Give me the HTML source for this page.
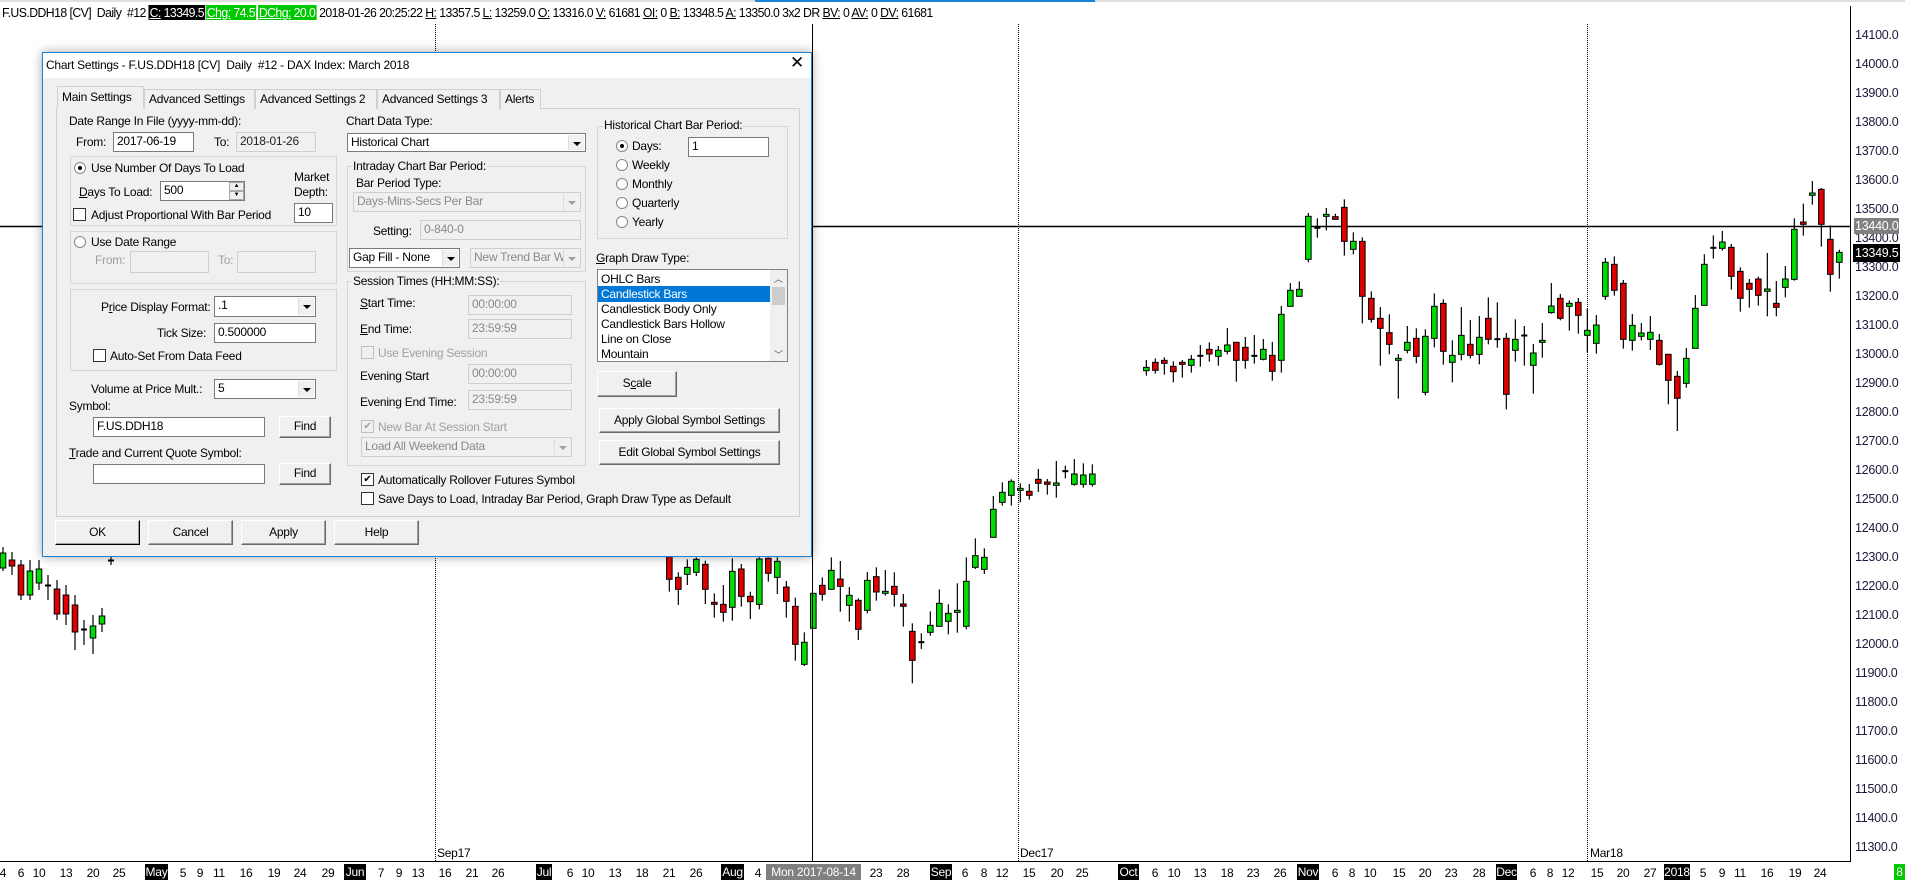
<!DOCTYPE html>
<html><head><meta charset="utf-8">
<style>
*{box-sizing:border-box;margin:0;padding:0}
body{width:1905px;height:880px;overflow:hidden;background:#fff;position:relative;font-family:"Liberation Sans",Arial,sans-serif;font-size:12px;letter-spacing:-0.25px;color:#000}
.a{position:absolute}
.t{position:absolute;line-height:14px;white-space:nowrap}
.g{color:#a0a0a0}
.in{position:absolute;background:#fff;border:1px solid #7a7a7a;line-height:17px;padding-left:3px;white-space:nowrap;overflow:hidden}
.dis{background:#f0f0f0;border-color:#cfcfcf;color:#8a8a8a}
.ar{position:absolute;right:1px;top:1px;bottom:1px;width:16px;background:#f0f0f0;border-left:1px solid #ddd}
.ar:after{content:"";position:absolute;left:4px;top:7px;border-left:4px solid transparent;border-right:4px solid transparent;border-top:4px solid #000}
.dis .ar:after{border-top-color:#a0a0a0}
.btn{position:absolute;background:#f0f0f0;border:1px solid;border-color:#fff #696969 #696969 #fff;box-shadow:inset -1px -1px 0 #a0a0a0;text-align:center;white-space:nowrap}
.gb{position:absolute;border:1px solid #d5d5d5}
.cb{position:absolute;width:13px;height:13px;border:1px solid #333;background:#fff}
.cb.dc{border-color:#c0c0c0;background:#f0f0f0}
.rd{position:absolute;width:12px;height:12px;border-radius:50%;border:1px solid #888;background:#fff}
.rd.on:after{content:"";position:absolute;left:3px;top:3px;width:4px;height:4px;border-radius:50%;background:#000}
.tab{position:absolute;top:89px;height:20px;border:1px solid #d0d0d0;border-bottom:none;background:#f0f0f0;line-height:18px;padding:0 4px;white-space:nowrap}
.yl{position:absolute;left:1855px;line-height:14px;font-size:12.5px;color:#1a1a3a}
.xl{position:absolute;top:866px;line-height:14px;font-size:12px;transform:translateX(-50%)}
.xb{position:absolute;top:864px;height:16px;background:#000;color:#fff;font-size:12px;line-height:16px;text-align:center}
u{text-decoration:underline}
</style></head><body>

<svg class="a" style="left:0;top:0" width="1905" height="880" id="ch">
<rect x="0" y="0" width="1905" height="2" fill="#e0e0e0"/>
<rect x="755" y="0" width="340" height="2" fill="#1883d7"/>
<line x1="435.5" y1="24" x2="435.5" y2="861" stroke="#000" stroke-dasharray="1,1"/>
<line x1="1018.5" y1="24" x2="1018.5" y2="861" stroke="#000" stroke-dasharray="1,1"/>
<line x1="1587.5" y1="24" x2="1587.5" y2="861" stroke="#000" stroke-dasharray="1,1"/>
<line x1="0" y1="226.5" x2="1850" y2="226.5" stroke="#000" stroke-width="1.5"/>
<g id="cd"></g>
<line x1="812.5" y1="24" x2="812.5" y2="861" stroke="#000"/>
<line x1="1850.5" y1="6" x2="1850.5" y2="862" stroke="#000"/>
<line x1="0" y1="861.5" x2="1851" y2="861.5" stroke="#000"/>
</svg>
<script>
(function(){
var g=document.getElementById('cd'),s='';
function c(x,t,b,h,l,k){
 var col=k=='g'?'#00dd00':k=='r'?'#e00000':'#000';
 if(t>b){var q=t;t=b;b=q;}
 s+='<line x1="'+x+'" y1="'+h+'" x2="'+x+'" y2="'+l+'" stroke="#000" stroke-width="1.2"/>';
 var hh=Math.max(b-t,1.5);
 if(k=='d'){s+='<rect x="'+(x-3)+'" y="'+(t-0.5)+'" width="6" height="2" fill="#000"/>';}
 else s+='<rect x="'+(x-2.8)+'" y="'+t+'" width="5.6" height="'+hh+'" fill="'+col+'" stroke="#000" stroke-width="1"/>';
}
function grp(bx,by,a){a.forEach(function(e){c(bx+e[0]/3,by+e[1]/3,by+e[2]/3,by+e[3]/3,by+e[4]/3,e[5]);});}
[[3,553,568,547,571,'g'],[12,560,566,552,575,'r'],[21,565,595,560,600,'r'],[30,571,595,560,600,'g'],[39,569,583,560,590,'g'],[48,585,586,575,600,'d'],[57,589,614,580,620,'r'],[66,595,614,585,625,'r'],[75,605,632,595,650,'r'],[84,629,630,620,645,'d'],[93,626,638,615,654,'g'],[102,616,624,608,632,'g']].forEach(function(e){c(e[0],e[1],e[2],e[3],e[4],e[5]);});
c(111,560,561,553,565,'d');
grp(640,450,[[88,240,388,240,425,'r'],[115,382,418,367,465,'r'],[142,352,373,328,405,'g'],[169,328,367,322,378,'g'],[196,343,418,332,462,'r'],[223,457,463,430,503,'r'],[250,463,487,405,515,'r'],[277,364,472,325,512,'g'],[304,357,439,342,470,'r'],[331,439,455,425,507,'r'],[358,327,463,322,478,'g'],[385,325,370,322,395,'r'],[412,334,382,322,432,'g'],[439,411,454,393,503,'r'],[466,469,583,443,632,'r'],[493,577,643,547,648,'g'],[520,430,535,430,535,'g'],[547,406,433,382,452,'r'],[574,361,418,322,418,'g'],[601,387,409,333,485,'r'],[628,436,466,411,515,'g'],[655,451,538,445,570,'r'],[682,391,481,366,490,'g'],[709,380,426,352,452,'r'],[736,424,430,360,437,'g'],[763,409,433,367,470,'r'],[790,462,469,432,530,'r'],[817,544,631,520,700,'r'],[844,575,577,550,597,'d'],[871,526,547,484,557,'g'],[898,460,529,418,529,'g'],[925,490,514,463,553,'g'],[952,481,487,400,548,'g'],[979,394,529,322,538,'g'],[1006,317,352,265,357,'g'],[1033,322,358,295,372,'g'],[1060,178,262,138,262,'g'],[1087,127,157,97,167,'g'],[1114,94,136,88,167,'g'],[1141,115,121,100,157,'g'],[1168,124,136,102,149,'r'],[1195,88,100,57,126,'r'],[1222,96,103,87,134,'r'],[1249,99,106,33,143,'g'],[1276,62,63,47,85,'d'],[1303,72,103,27,107,'g'],[1330,75,103,40,113,'g'],[1357,72,103,43,110,'g']]);
grp(1100,180,[[139,562,572,540,587,'g'],[166,547,571,535,581,'r'],[193,541,550,532,584,'r'],[220,559,575,544,607,'r'],[247,547,553,540,593,'r'],[274,538,556,525,578,'g'],[301,526,528,495,560,'d'],[328,508,522,487,545,'r'],[355,511,529,498,557,'g'],[382,495,514,444,523,'g'],[409,487,541,486,605,'r'],[436,502,541,471,566,'r'],[463,526,529,465,551,'d'],[490,508,538,477,541,'g'],[517,526,574,486,602,'r'],[544,403,541,378,578,'g'],[571,331,379,309,379,'g'],[598,328,349,304,349,'g'],[625,109,238,99,247,'g'],[652,142,143,115,173,'d'],[679,103,109,84,151,'g'],[706,110,118,101,118,'r'],[733,82,184,58,227,'r'],[760,184,208,157,223,'g'],[787,184,349,172,430,'r'],[814,355,418,334,428,'r'],[841,415,445,381,557,'r'],[868,458,493,403,523,'r'],[895,535,541,522,656,'g'],[922,487,511,438,520,'g'],[949,475,529,445,550,'r'],[976,469,637,448,646,'g'],[1003,379,475,340,502,'g'],[1030,370,514,358,554,'r'],[1057,526,547,481,607,'g'],[1084,466,523,381,541,'g'],[1111,493,526,420,535,'r'],[1138,472,523,408,553,'g'],[1165,415,478,352,493,'r'],[1192,476,478,367,503,'d']]);
grp(1490,160,[[49,535,703,519,748,'r'],[76,538,571,478,605,'g'],[103,525,526,498,617,'d'],[130,579,616,552,701,'g'],[157,541,547,489,593,'g'],[184,438,458,369,461,'g'],[211,415,475,402,481,'r'],[238,430,439,421,512,'g'],[265,427,466,414,521,'r'],[292,511,526,445,578,'g'],[319,495,550,465,581,'g'],[346,307,409,294,419,'g'],[373,313,391,289,407,'r'],[400,370,538,360,566,'r'],[427,496,541,462,572,'g'],[454,519,529,489,541,'g'],[481,517,538,468,570,'g'],[508,541,613,522,617,'r'],[535,583,661,583,733,'r'],[562,649,715,633,813,'r'],[589,595,670,564,683,'g'],[616,445,565,405,565,'g'],[643,313,436,283,436,'g'],[670,262,263,226,296,'d'],[697,246,265,213,272,'g'],[724,262,349,252,389,'r'],[751,334,415,322,455,'r'],[778,370,388,357,443,'r'],[805,357,406,350,437,'r'],[832,387,394,279,469,'g'],[859,430,442,363,469,'r'],[886,357,382,318,412,'g'],[913,208,358,175,362,'g'],[940,186,193,131,227,'r'],[967,99,106,63,134,'g'],[994,88,193,84,260,'r'],[1021,238,343,196,395,'r'],[1048,277,307,269,356,'g']]);
g.innerHTML=s;
})();
</script>

<div class="t" style="left:2px;top:6px;font-size:13px;letter-spacing:-0.6px;transform:scaleX(0.945);transform-origin:0 0">F.US.DDH18 [CV]&nbsp; Daily&nbsp; #12 <span style="background:#000;color:#fff;padding:0 1px"><u>C:</u> 13349.5</span><span style="background:#00c800;color:#fff;padding:0 1px;margin-left:1px"><u>Chg:</u> 74.5</span><span style="background:#00c800;color:#fff;padding:0 1px;margin-left:2px"><u>DChg:</u> 20.0</span> 2018-01-26 20:25:22 <u>H:</u> 13357.5 <u>L:</u> 13259.0 <u>O:</u> 13316.0 <u>V:</u> 61681 <u>OI:</u> 0 <u>B:</u> 13348.5 <u>A:</u> 13350.0 3x2 DR <u>BV:</u> 0 <u>AV:</u> 0 <u>DV:</u> 61681</div>

<div class="yl" style="top:28px">14100.0</div>
<div class="yl" style="top:57px">14000.0</div>
<div class="yl" style="top:86px">13900.0</div>
<div class="yl" style="top:115px">13800.0</div>
<div class="yl" style="top:144px">13700.0</div>
<div class="yl" style="top:173px">13600.0</div>
<div class="yl" style="top:202px">13500.0</div>
<div class="yl" style="top:231px">13400.0</div>
<div class="yl" style="top:260px">13300.0</div>
<div class="yl" style="top:289px">13200.0</div>
<div class="yl" style="top:318px">13100.0</div>
<div class="yl" style="top:347px">13000.0</div>
<div class="yl" style="top:376px">12900.0</div>
<div class="yl" style="top:405px">12800.0</div>
<div class="yl" style="top:434px">12700.0</div>
<div class="yl" style="top:463px">12600.0</div>
<div class="yl" style="top:492px">12500.0</div>
<div class="yl" style="top:521px">12400.0</div>
<div class="yl" style="top:550px">12300.0</div>
<div class="yl" style="top:579px">12200.0</div>
<div class="yl" style="top:608px">12100.0</div>
<div class="yl" style="top:637px">12000.0</div>
<div class="yl" style="top:666px">11900.0</div>
<div class="yl" style="top:695px">11800.0</div>
<div class="yl" style="top:724px">11700.0</div>
<div class="yl" style="top:753px">11600.0</div>
<div class="yl" style="top:782px">11500.0</div>
<div class="yl" style="top:811px">11400.0</div>
<div class="yl" style="top:840px">11300.0</div>
<div class="yl" style="top:218px;left:1854px;background:#808080;color:#fff;padding:1px 1px">13440.0</div>
<div class="yl" style="top:244px;left:1853px;background:#000;color:#fff;padding:2px 2px">13349.5</div>

<div class="t" style="left:437px;top:846px">Sep17</div>
<div class="t" style="left:1020px;top:846px">Dec17</div>
<div class="t" style="left:1590px;top:846px">Mar18</div>
<div class="xl" style="left:3px">4</div><div class="xl" style="left:21px">6</div><div class="xl" style="left:39px">10</div><div class="xl" style="left:66px">13</div><div class="xl" style="left:93px">20</div><div class="xl" style="left:119px">25</div>
<div class="xb" style="left:145px;width:23px">May</div>
<div class="xl" style="left:183px">5</div><div class="xl" style="left:200px">9</div><div class="xl" style="left:219px">11</div><div class="xl" style="left:246px">16</div><div class="xl" style="left:274px">19</div><div class="xl" style="left:300px">24</div><div class="xl" style="left:328px">29</div>
<div class="xb" style="left:344px;width:22px">Jun</div>
<div class="xl" style="left:381px">7</div><div class="xl" style="left:399px">9</div><div class="xl" style="left:418px">13</div><div class="xl" style="left:445px">16</div><div class="xl" style="left:472px">21</div><div class="xl" style="left:498px">26</div>
<div class="xb" style="left:536px;width:16px">Jul</div>
<div class="xl" style="left:570px">6</div><div class="xl" style="left:588px">10</div><div class="xl" style="left:615px">13</div><div class="xl" style="left:642px">18</div><div class="xl" style="left:669px">21</div><div class="xl" style="left:696px">26</div>
<div class="xb" style="left:721px;width:23px">Aug</div>
<div class="xl" style="left:758px">4</div>
<div class="xb" style="left:766px;width:95px;background:#808080">Mon 2017-08-14</div>
<div class="xl" style="left:876px">23</div><div class="xl" style="left:903px">28</div>
<div class="xb" style="left:930px;width:22px">Sep</div>
<div class="xl" style="left:965px">6</div><div class="xl" style="left:984px">8</div><div class="xl" style="left:1002px">12</div><div class="xl" style="left:1029px">15</div><div class="xl" style="left:1057px">20</div><div class="xl" style="left:1082px">25</div>
<div class="xb" style="left:1118px;width:21px">Oct</div>
<div class="xl" style="left:1155px">6</div><div class="xl" style="left:1174px">10</div><div class="xl" style="left:1200px">13</div><div class="xl" style="left:1227px">18</div><div class="xl" style="left:1253px">23</div><div class="xl" style="left:1280px">26</div>
<div class="xb" style="left:1297px;width:22px">Nov</div>
<div class="xl" style="left:1335px">6</div><div class="xl" style="left:1352px">8</div><div class="xl" style="left:1370px">10</div><div class="xl" style="left:1399px">15</div><div class="xl" style="left:1425px">20</div><div class="xl" style="left:1451px">23</div><div class="xl" style="left:1479px">28</div>
<div class="xb" style="left:1496px;width:21px">Dec</div>
<div class="xl" style="left:1533px">6</div><div class="xl" style="left:1550px">8</div><div class="xl" style="left:1568px">12</div><div class="xl" style="left:1597px">15</div><div class="xl" style="left:1623px">20</div><div class="xl" style="left:1650px">27</div>
<div class="xb" style="left:1664px;width:26px">2018</div>
<div class="xl" style="left:1703px">5</div><div class="xl" style="left:1722px">9</div><div class="xl" style="left:1740px">11</div><div class="xl" style="left:1767px">16</div><div class="xl" style="left:1795px">19</div><div class="xl" style="left:1820px">24</div>
<div class="xb" style="left:1894px;width:11px;background:#00c800">8</div>

<div class="a" style="left:42px;top:52px;width:770px;height:505px;border:1px solid #1883d7;background:#f0f0f0;box-shadow:0 0 10px rgba(0,0,0,.35)"></div>
<div class="a" style="left:43px;top:53px;width:768px;height:25px;background:#fff"></div>
<div class="t" style="left:46px;top:58px">Chart Settings - F.US.DDH18 [CV]&nbsp; Daily&nbsp; #12 - DAX Index: March 2018</div>
<div class="t" style="left:790px;top:56px;font-size:17px">✕</div>

<div class="a" style="left:56px;top:108px;width:744px;height:409px;border:1px solid #d0d0d0;background:#f0f0f0"></div>
<div class="tab" style="left:144px;width:111px">Advanced Settings</div>
<div class="tab" style="left:255px;width:122px">Advanced Settings 2</div>
<div class="tab" style="left:377px;width:123px">Advanced Settings 3</div>
<div class="tab" style="left:500px;width:41px">Alerts</div>
<div class="tab" style="left:57px;top:86px;height:23px;width:87px;line-height:20px;background:#f0f0f0;z-index:2;border-bottom:1px solid #f0f0f0">Main Settings</div>

<div class="t" style="left:69px;top:114px">Date Range In File (yyyy-mm-dd):</div>
<div class="t" style="left:76px;top:135px">From:</div>
<div class="in" style="left:113px;top:132px;width:81px;height:20px">2017-06-19</div>
<div class="t" style="left:214px;top:135px">To:</div>
<div class="in dis" style="left:236px;top:132px;width:80px;height:20px;color:#222">2018-01-26</div>

<div class="gb" style="left:70px;top:156px;width:267px;height:70px"></div>
<div class="rd on" style="left:74px;top:162px"></div>
<div class="t" style="left:91px;top:161px">Use Number Of Days To Load</div>
<div class="t" style="left:79px;top:185px"><u>D</u>ays To Load:</div>
<div class="in" style="left:160px;top:181px;width:85px;height:20px">500</div>
<div class="a" style="left:229px;top:182px;width:15px;height:9px;background:#f0f0f0;border:1px solid #aaa;font-size:6px;line-height:7px;text-align:center">▲</div>
<div class="a" style="left:229px;top:191px;width:15px;height:9px;background:#f0f0f0;border:1px solid #aaa;font-size:6px;line-height:7px;text-align:center">▼</div>
<div class="t" style="left:294px;top:170px">Market</div>
<div class="t" style="left:294px;top:185px">Depth:</div>
<div class="in" style="left:294px;top:203px;width:39px;height:20px">10</div>
<div class="cb" style="left:73px;top:208px"></div>
<div class="t" style="left:91px;top:208px">Adjust Proportional With Bar Period</div>

<div class="gb" style="left:70px;top:231px;width:267px;height:53px"></div>
<div class="rd" style="left:74px;top:236px"></div>
<div class="t" style="left:91px;top:235px">Use Date Range</div>
<div class="t g" style="left:95px;top:253px">From:</div>
<div class="in dis" style="left:130px;top:251px;width:79px;height:22px"></div>
<div class="t g" style="left:218px;top:253px">To:</div>
<div class="in dis" style="left:237px;top:251px;width:79px;height:22px"></div>

<div class="gb" style="left:70px;top:289px;width:267px;height:82px"></div>
<div class="t" style="left:101px;top:300px">P<u>r</u>ice Display Format:</div>
<div class="in" style="left:214px;top:296px;width:102px;height:21px">.1<i class="ar"></i></div>
<div class="t" style="left:157px;top:326px">Tick Size:</div>
<div class="in" style="left:214px;top:323px;width:102px;height:20px">0.500000</div>
<div class="cb" style="left:93px;top:349px"></div>
<div class="t" style="left:110px;top:349px">Auto-Set From Data Feed</div>

<div class="t" style="left:91px;top:382px">Volume at Price Mult.:</div>
<div class="in" style="left:214px;top:379px;width:102px;height:20px">5<i class="ar"></i></div>
<div class="t" style="left:69px;top:399px">Symbol:</div>
<div class="in" style="left:93px;top:417px;width:172px;height:20px">F.US.DDH18</div>
<div class="btn" style="left:279px;top:416px;width:52px;height:22px;line-height:19px">Find</div>
<div class="t" style="left:69px;top:446px"><u>T</u>rade and Current Quote Symbol:</div>
<div class="in" style="left:93px;top:464px;width:172px;height:20px"></div>
<div class="btn" style="left:279px;top:463px;width:52px;height:22px;line-height:19px">Find</div>

<div class="t" style="left:346px;top:114px">Chart Data Type:</div>
<div class="in" style="left:347px;top:133px;width:239px;height:19px">Historical Chart<i class="ar"></i></div>

<div class="gb" style="left:347px;top:166px;width:239px;height:106px"></div>
<div class="t" style="left:352px;top:159px;background:#f0f0f0;padding:0 1px">Intraday Chart Bar Period:</div>
<div class="t" style="left:356px;top:176px">Bar Period Type:</div>
<div class="in dis" style="left:353px;top:192px;width:228px;height:20px">Days-Mins-Secs Per Bar<i class="ar"></i></div>
<div class="t" style="left:373px;top:224px">Setting:</div>
<div class="in dis" style="left:420px;top:220px;width:161px;height:20px">0-840-0</div>
<div class="in" style="left:349px;top:248px;width:111px;height:20px">Gap Fill - None<i class="ar"></i></div>
<div class="in dis" style="left:470px;top:248px;width:111px;height:20px">New Trend Bar W<i class="ar"></i></div>

<div class="gb" style="left:347px;top:281px;width:239px;height:185px"></div>
<div class="t" style="left:352px;top:274px;background:#f0f0f0;padding:0 1px">Session Times (HH:MM:SS):</div>
<div class="t" style="left:360px;top:296px"><u>S</u>tart Time:</div>
<div class="in dis" style="left:468px;top:295px;width:104px;height:20px">00:00:00</div>
<div class="t" style="left:360px;top:322px"><u>E</u>nd Time:</div>
<div class="in dis" style="left:468px;top:319px;width:104px;height:20px">23:59:59</div>
<div class="cb dc" style="left:361px;top:346px"></div>
<div class="t g" style="left:378px;top:346px">Use Evening Session</div>
<div class="t" style="left:360px;top:369px">Evening Start</div>
<div class="in dis" style="left:468px;top:364px;width:104px;height:20px">00:00:00</div>
<div class="t" style="left:360px;top:395px">Evening End Time:</div>
<div class="in dis" style="left:468px;top:390px;width:104px;height:20px">23:59:59</div>
<div class="cb dc" style="left:361px;top:420px;font-size:10px;line-height:11px;text-align:center;color:#a0a0a0">✔</div>
<div class="t g" style="left:378px;top:420px">New Bar At Session Start</div>
<div class="in dis" style="left:361px;top:437px;width:211px;height:20px">Load All Weekend Data<i class="ar"></i></div>

<div class="cb" style="left:361px;top:473px;font-size:10px;line-height:11px;text-align:center">✔</div>
<div class="t" style="left:378px;top:473px">Automatically Rollover Futures Symbol</div>
<div class="cb" style="left:361px;top:492px"></div>
<div class="t" style="left:378px;top:492px">Save Days to Load, Intraday Bar Period, Graph Draw Type as Default</div>

<div class="gb" style="left:597px;top:126px;width:191px;height:113px"></div>
<div class="t" style="left:603px;top:118px;background:#f0f0f0;padding:0 1px">Historical Chart Bar Period:</div>
<div class="rd on" style="left:616px;top:140px"></div>
<div class="t" style="left:632px;top:139px">Days:</div>
<div class="in" style="left:688px;top:137px;width:81px;height:20px">1</div>
<div class="rd" style="left:616px;top:159px"></div><div class="t" style="left:632px;top:158px">Weekly</div>
<div class="rd" style="left:616px;top:178px"></div><div class="t" style="left:632px;top:177px">Monthly</div>
<div class="rd" style="left:616px;top:197px"></div><div class="t" style="left:632px;top:196px">Quarterly</div>
<div class="rd" style="left:616px;top:216px"></div><div class="t" style="left:632px;top:215px">Yearly</div>

<div class="t" style="left:596px;top:251px"><u>G</u>raph Draw Type:</div>
<div class="a" style="left:597px;top:269px;width:191px;height:93px;background:#fff;border:1px solid #828282"></div>
<div class="a" style="left:598px;top:286px;width:172px;height:16px;background:#0078d7"></div>
<div class="t" style="left:601px;top:272px">OHLC Bars</div>
<div class="t" style="left:601px;top:287px;color:#fff">Candlestick Bars</div>
<div class="t" style="left:601px;top:302px">Candlestick Body Only</div>
<div class="t" style="left:601px;top:317px">Candlestick Bars Hollow</div>
<div class="t" style="left:601px;top:332px">Line on Close</div>
<div class="t" style="left:601px;top:347px">Mountain</div>
<div class="a" style="left:770px;top:270px;width:17px;height:91px;background:#f0f0f0"></div>
<div class="a" style="left:772px;top:287px;width:13px;height:18px;background:#cdcdcd"></div>
<div class="t" style="left:774px;top:272px;font-size:9px;color:#555">︿</div>
<div class="t" style="left:774px;top:348px;font-size:9px;color:#555">﹀</div>

<div class="btn" style="left:597px;top:371px;width:80px;height:26px;line-height:23px">S<u>c</u>ale</div>
<div class="btn" style="left:599px;top:408px;width:181px;height:25px;line-height:22px">Apply Global Symbol Settings</div>
<div class="btn" style="left:599px;top:440px;width:181px;height:25px;line-height:22px">Edit Global Symbol Settings</div>

<div class="btn" style="left:55px;top:520px;width:85px;height:25px;line-height:22px;border-color:#fff #000 #000 #fff">OK</div>
<div class="btn" style="left:148px;top:520px;width:85px;height:25px;line-height:22px">Cancel</div>
<div class="btn" style="left:241px;top:520px;width:85px;height:25px;line-height:22px">Apply</div>
<div class="btn" style="left:334px;top:520px;width:85px;height:25px;line-height:22px">Help</div>

</body></html>
